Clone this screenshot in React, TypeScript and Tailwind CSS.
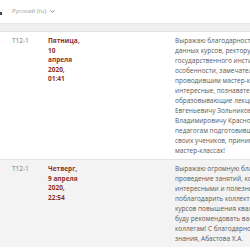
import { ChevronDown } from 'lucide-react';

const rows = [
    {
        group: 'T12-1',
        date: 'Пятница, 10 апреля 2020, 01:41',
        lines: [
            'Выражаю благодарность организаторам',
            'данных курсов, ректору Северо-Осетинского',
            'государственного института искусств и,',
            'особенности, замечательным педагогам,',
            'проводившим мастер-классы, за',
            'интересные, познавательные и',
            'образовывающие лекции. Вадиму',
            'Евгеньевичу Зольникову, Сергею',
            'Владимировичу Краснову, а также',
            'педагогам подготовившим',
            'своих учеников, принимавших участие в',
            'мастер-классах!',
        ],
    },
    {
        group: 'T12-1',
        date: 'Четверг, 9 апреля 2020, 22:54',
        lines: [
            'Выражаю огромную благодарность за',
            'проведение занятий, которые были очень',
            'интересными и полезными. Хочу',
            'поблагодарить коллектив организаторов',
            'курсов повышения квалификации. Обязательно',
            'буду рекомендовать ваши курсы своим',
            'коллегам! С благодарностью за полученные',
            'знания, Абастова Х.А.',
        ],
    },
];

export default function App() {
    return (
        <div className="w-[250px] h-[250px] overflow-hidden bg-white font-['Open_Sans',sans-serif]">
            <header className="h-[23px] flex items-center relative bg-white">
                <span className="absolute left-0 top-[12px] w-[2px] h-[3px] bg-[#444]" />
                <div className="pl-[12px] flex items-center gap-[3px] text-[6px] text-[#9a9a9a]">
                    Русский (ru)
                    <ChevronDown size={7} strokeWidth={3} className="text-[#777]" />
                </div>
            </header>
            <div className="h-[8px] bg-[#efefef] border-t border-[#e8e8e8]" />

            {rows.map((row, i) => (
                <div
                    key={i}
                    className={`grid grid-cols-[36px_127px_1fr] pl-[12px] pt-[4px] pb-[3px] border-t border-[#e2e2e2] ${i % 2 === 1 ? 'bg-[#f3f3f3]' : 'bg-white'}`}
                >
                    <div className="text-[6.5px] leading-[10px] text-[#777]">{row.group}</div>
                    <div className="w-[33px] text-[6.5px] leading-[9.5px] font-bold text-[#8b3328]">
                        {row.date}
                    </div>
                    <div className="text-[6.5px] leading-[10px] text-[#5a5a5a] whitespace-nowrap">
                        {row.lines.map((l, j) => (
                            <div key={j}>{l}</div>
                        ))}
                    </div>
                </div>
            ))}
        </div>
    );
}
